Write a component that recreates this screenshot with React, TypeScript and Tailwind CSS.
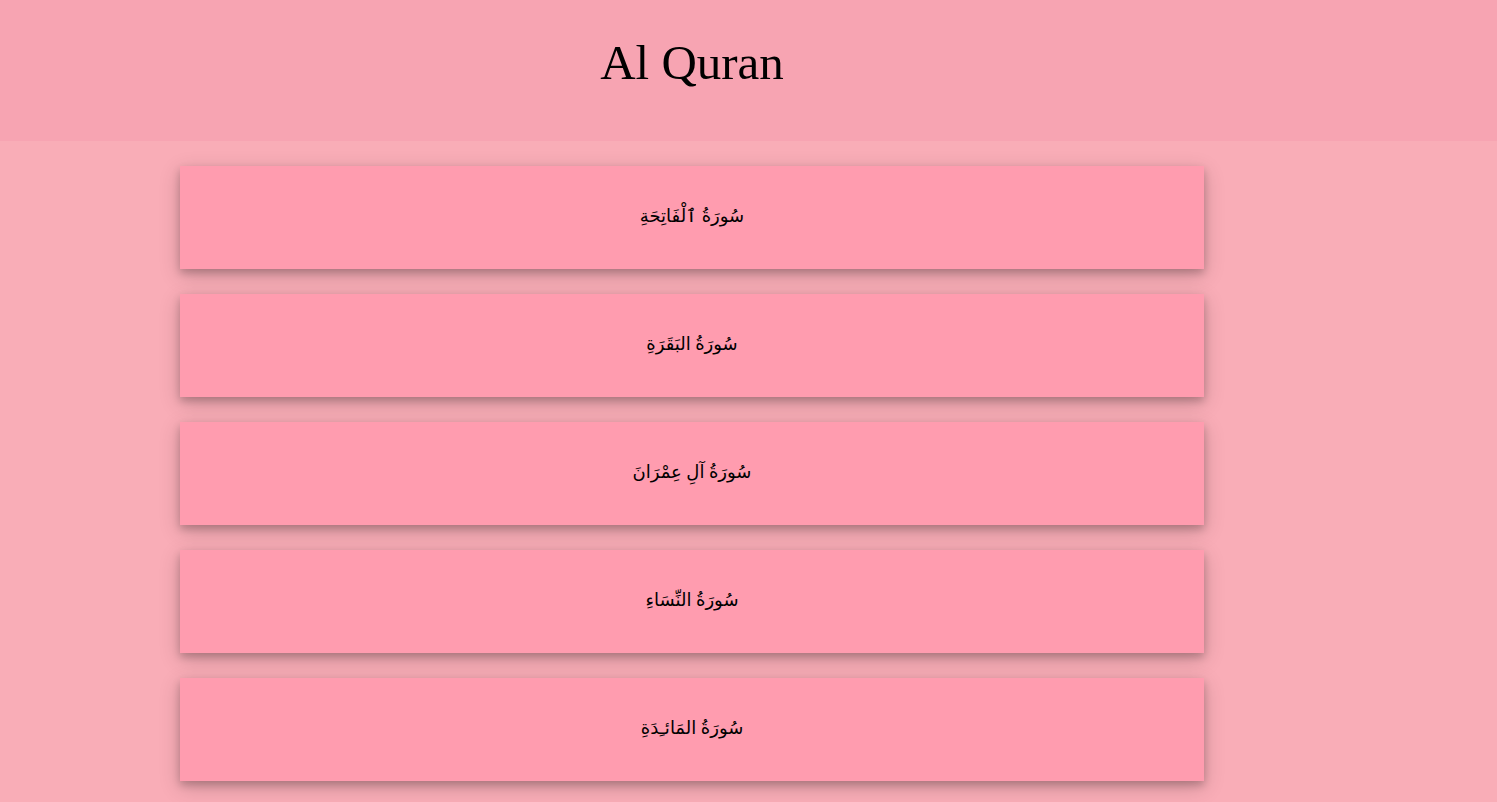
import React from 'react';

const surahs = [
  'سُورَةُ ٱلْفَاتِحَةِ',
  'سُورَةُ البَقَرَةِ',
  'سُورَةُ آلِ عِمْرَانَ',
  'سُورَةُ النِّسَاءِ',
  'سُورَةُ المَائـِدَةِ',
];

const App: React.FC = () => {
  return (
    <div className="min-h-screen bg-[#f9adb7] font-['Liberation_Serif','DejaVu_Sans',serif] text-black">
      <header className="h-[141px] bg-[#f7a4b2]">
        <div className="w-[1024px] ml-[180px] pt-[34px] text-center">
          <h1 className="text-[49px] leading-[57px]">Al Quran</h1>
        </div>
      </header>
      <main className="w-[1024px] ml-[180px] pt-[25px] flex flex-col gap-[25px]">
        {surahs.map((name) => (
          <div
            key={name}
            className="h-[103px] bg-[#ff9caf] flex items-center justify-center shadow-[0_4px_8px_0_rgba(0,0,0,0.2),0_6px_20px_0_rgba(0,0,0,0.19)]"
          >
            <span dir="rtl" className="text-[18px] leading-[24px] -mt-[3px]">{name}</span>
          </div>
        ))}
      </main>
    </div>
  );
};

export default App;
